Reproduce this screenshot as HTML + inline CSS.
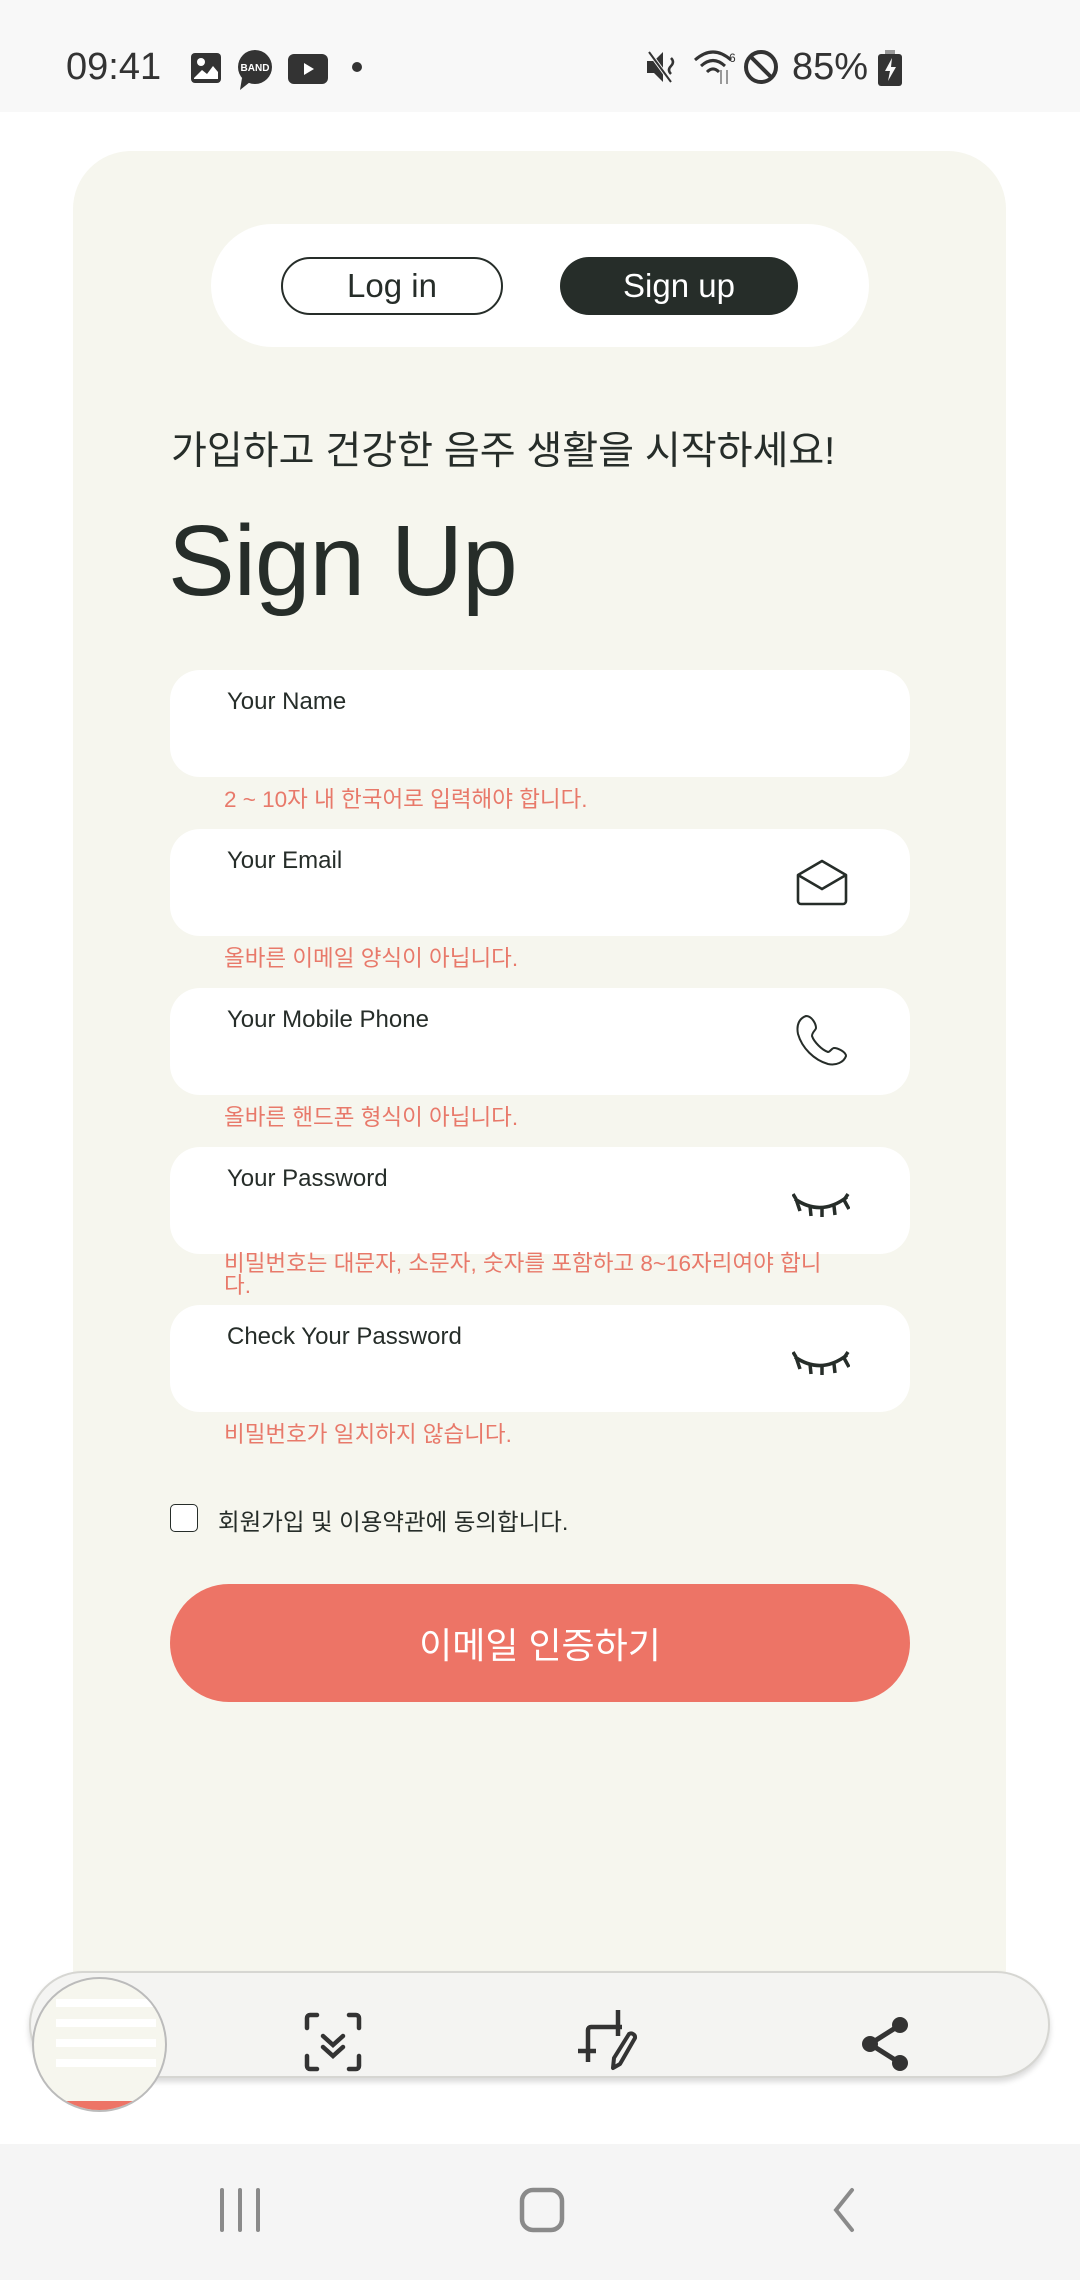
<!DOCTYPE html>
<html><head><meta charset="utf-8"><style>
*{margin:0;padding:0;box-sizing:border-box}
body{width:1080px;height:2280px;position:relative;background:#fff;font-family:"Liberation Sans","Noto Sans CJK KR",sans-serif;overflow:hidden;color:#262d29}
.abs{position:absolute}
.sb{left:0;top:0;width:1080px;height:112px;background:#f8f8f8}
.card{left:73px;top:151px;width:933px;height:1900px;background:#f6f6ee;border-radius:58px 58px 0 0}
.tog{left:211px;top:224px;width:658px;height:123px;background:#fff;border-radius:62px}
.btn{top:257px;height:58px;border-radius:29px;font-size:33px;display:flex;align-items:center;justify-content:center}
.field{left:170px;width:740px;height:107px;background:#fff;border-radius:30px}
.lbl{position:absolute;left:57px;top:18px;font-size:24px;color:#262d29}
.err{left:224px;font-size:22.5px;color:#e8796a;line-height:22px}
.ic{position:absolute;right:60px}
</style></head><body>
<div class="abs sb"></div>
<div class="abs" style="left:66px;top:46px;font-size:38px;color:#333">09:41</div>
<svg class="abs" style="left:190px;top:52px" width="32" height="32" viewBox="0 0 32 32"><rect x="1" y="1" width="30" height="30" rx="4" fill="#333"/><circle cx="11" cy="10" r="4" fill="#fff"/><path d="M4 26 L12 18 L17 22 L23 14 L28 20 V27 H4Z" fill="#fff"/></svg>
<svg class="abs" style="left:236px;top:50px" width="38" height="40" viewBox="0 0 38 40"><circle cx="19" cy="17" r="17" fill="#333"/><path d="M6 28 L4 40 L14 32Z" fill="#333"/><text x="19" y="21" font-size="10" fill="#fff" text-anchor="middle" font-family="Liberation Sans" font-weight="bold">BAND</text></svg>
<svg class="abs" style="left:288px;top:54px" width="40" height="30" viewBox="0 0 40 30"><rect width="40" height="30" rx="6" fill="#333"/><path d="M16 9 L26 15 L16 21Z" fill="#fff"/></svg>
<div class="abs" style="left:352px;top:62px;width:10px;height:10px;border-radius:5px;background:#333"></div>
<svg class="abs" style="left:645px;top:48px" width="36" height="38" viewBox="0 0 36 38"><path d="M2 13 H9 L18 4 V34 L9 25 H2Z" fill="#333"/><path d="M4 4 L26 34" stroke="#f8f8f8" stroke-width="4"/><path d="M4 4 L26 34" stroke="#333" stroke-width="2"/><path d="M26 10 q4 4 0 8 q-4 4 0 8" stroke="#333" stroke-width="2.5" fill="none"/></svg>
<svg class="abs" style="left:693px;top:48px" width="46" height="38" viewBox="0 0 46 38"><path d="M2 12 Q20 -4 38 12" stroke="#333" stroke-width="3" fill="none"/><path d="M8 18 Q20 7 32 18" stroke="#333" stroke-width="3" fill="none"/><path d="M14 24 Q20 18 26 24" stroke="#333" stroke-width="3" fill="none"/><path d="M28 22 v14 M34 36 v-14" stroke="#999" stroke-width="2"/><text x="36" y="14" font-size="12" fill="#333">6</text></svg>
<svg class="abs" style="left:742px;top:48px" width="38" height="38" viewBox="0 0 38 38"><circle cx="19" cy="19" r="15" stroke="#333" stroke-width="4" fill="none"/><path d="M9 9 L29 29" stroke="#333" stroke-width="4"/></svg>
<div class="abs" style="left:792px;top:46px;font-size:38px;color:#333">85%</div>
<svg class="abs" style="left:876px;top:50px" width="28" height="36" viewBox="0 0 28 36"><rect x="9" y="0" width="10" height="4" fill="#999"/><rect x="2" y="4" width="24" height="32" rx="3" fill="#333"/><path d="M16 8 L9 21 H14 L12 31 L20 17 H15Z" fill="#f8f8f8"/></svg>

<div class="abs card"></div>
<div class="abs tog"></div>
<div class="abs btn" style="left:281px;width:222px;border:2px solid #262d29;background:#fff;color:#262d29">Log in</div>
<div class="abs btn" style="left:560px;width:238px;background:#262d29;color:#fff">Sign up</div>
<div class="abs" style="left:171px;top:420px;font-size:39px;color:#262d29">가입하고 건강한 음주 생활을 시작하세요!</div>
<div class="abs" style="left:168px;top:504px;font-size:100px;color:#262d29;letter-spacing:-1px">Sign Up</div>

<div class="abs field" style="top:670px"><span class="lbl">Your Name</span></div>
<div class="abs err" style="top:789px">2 ~ 10자 내 한국어로 입력해야 합니다.</div>
<div class="abs field" style="top:829px"><span class="lbl">Your Email</span>
<svg class="ic" style="top:24px" width="56" height="56" viewBox="0 0 56 56"><path d="M4 22 L28 8 L52 22 V48 a3 3 0 0 1 -3 3 H7 a3 3 0 0 1 -3 -3Z" stroke="#262d29" stroke-width="2.6" fill="none" stroke-linejoin="round"/><path d="M4 22 L28 36 L52 22" stroke="#262d29" stroke-width="2.6" fill="none"/></svg></div>
<div class="abs err" style="top:948px">올바른 이메일 양식이 아닙니다.</div>
<div class="abs field" style="top:988px"><span class="lbl">Your Mobile Phone</span>
<svg class="ic" style="top:24px" width="56" height="56" viewBox="0 0 56 56"><path d="M12 4 C6 6 2 12 4 22 C8 36 20 48 34 52 C42 54 50 50 52 44 C52 40 44 36 40 36 C38 36 36 40 34 40 C28 38 20 30 18 24 C18 20 22 18 22 16 C22 12 18 4 12 4Z" stroke="#262d29" stroke-width="2" fill="none"/></svg></div>
<div class="abs err" style="top:1107px">올바른 핸드폰 형식이 아닙니다.</div>
<div class="abs field" style="top:1147px"><span class="lbl">Your Password</span>
<svg class="ic" style="top:44px" width="58" height="30" viewBox="0 0 58 30"><path d="M3 8 Q29 26 55 6" stroke="#262d29" stroke-width="3.5" fill="none"/><path d="M4 8 L1 3 M4 8 L8 20 M18 15 L19 25 M30 17 L30 26 M42 15 L43 24 M52 9 L57 18 M52 9 L56 3" stroke="#262d29" stroke-width="3.5"/></svg></div>
<div class="abs err" style="top:1253px">비밀번호는 대문자, 소문자, 숫자를 포함하고 8~16자리여야 합니<br>다.</div>
<div class="abs field" style="top:1305px"><span class="lbl">Check Your Password</span>
<svg class="ic" style="top:44px" width="58" height="30" viewBox="0 0 58 30"><path d="M3 8 Q29 26 55 6" stroke="#262d29" stroke-width="3.5" fill="none"/><path d="M4 8 L1 3 M4 8 L8 20 M18 15 L19 25 M30 17 L30 26 M42 15 L43 24 M52 9 L57 18 M52 9 L56 3" stroke="#262d29" stroke-width="3.5"/></svg></div>
<div class="abs err" style="top:1424px">비밀번호가 일치하지 않습니다.</div>

<div class="abs" style="left:170px;top:1504px;width:28px;height:28px;border:1.5px solid #262d29;border-radius:5px;background:#fff"></div>
<div class="abs" style="left:218px;top:1503px;font-size:23.5px;color:#262d29">회원가입 및 이용약관에 동의합니다.</div>
<div class="abs" style="left:170px;top:1584px;width:740px;height:118px;border-radius:59px;background:#ed7466;color:#fff;font-size:36px;display:flex;align-items:center;justify-content:center">이메일 인증하기</div>

<div class="abs" style="left:0;top:2076px;width:1080px;height:68px;background:#fff"></div>
<div class="abs" style="left:29px;top:1971px;width:1021px;height:107px;background:#f4f4f2;border:2px solid #d6d6d2;border-radius:54px;box-shadow:0 4px 6px rgba(0,0,0,0.15)"></div>
<div class="abs" style="left:32px;top:1977px;width:135px;height:135px;border-radius:50%;border:2px solid #bbb;background:#f6f6ee;overflow:hidden">
<div style="position:absolute;left:22px;top:20px;width:100px;height:8px;background:#fff"></div>
<div style="position:absolute;left:22px;top:40px;width:100px;height:8px;background:#fff"></div>
<div style="position:absolute;left:22px;top:60px;width:100px;height:8px;background:#fff"></div>
<div style="position:absolute;left:22px;top:80px;width:100px;height:8px;background:#fff"></div>
<div style="position:absolute;left:0;top:122px;width:135px;height:14px;background:#ed7466"></div>
</div>
<svg class="abs" style="left:303px;top:2012px" width="60" height="60" viewBox="0 0 60 60"><path d="M4 16 V6 a3 3 0 0 1 3-3 H14 M46 3 H53 a3 3 0 0 1 3 3 V16 M4 44 V54 a3 3 0 0 0 3 3 H14 M46 57 H53 a3 3 0 0 0 3-3 V44" stroke="#333" stroke-width="4.5" fill="none" stroke-linecap="round"/><path d="M20 24 L30 33 L40 24 M20 35 L30 44 L40 35" stroke="#333" stroke-width="4.5" fill="none" stroke-linecap="round"/></svg>
<svg class="abs" style="left:574px;top:2006px" width="72" height="72" viewBox="0 0 72 72"><path d="M4 45 H22 M14 56 V24 a3 3 0 0 1 3-3 H48 M44 4 V30" stroke="#333" stroke-width="4.5" fill="none"/><path d="M40 52 L55 28 a4 4 0 0 1 6 4 L46 58 L39 62Z" stroke="#333" stroke-width="4" fill="none" stroke-linejoin="round"/></svg>
<svg class="abs" style="left:858px;top:2016px" width="54" height="56" viewBox="0 0 54 56"><path d="M42 9 L12 28 L42 47" stroke="#333" stroke-width="5" fill="none"/><circle cx="42" cy="9" r="8" fill="#333"/><circle cx="12" cy="28" r="8" fill="#333"/><circle cx="42" cy="47" r="8" fill="#333"/></svg>

<div class="abs" style="left:0;top:2144px;width:1080px;height:136px;background:#f5f5f5"></div>
<svg class="abs" style="left:218px;top:2186px" width="44" height="48" viewBox="0 0 44 48"><path d="M4 4 V44 M22 4 V44 M40 4 V44" stroke="#8a8a8a" stroke-width="4" stroke-linecap="round"/></svg>
<svg class="abs" style="left:518px;top:2186px" width="50" height="50" viewBox="0 0 50 50"><rect x="4" y="4" width="40" height="40" rx="11" stroke="#8a8a8a" stroke-width="4.5" fill="none"/></svg>
<svg class="abs" style="left:828px;top:2186px" width="30" height="48" viewBox="0 0 30 48"><path d="M24 4 L8 24 L24 44" stroke="#8a8a8a" stroke-width="4" fill="none" stroke-linecap="round"/></svg>
</body></html>
